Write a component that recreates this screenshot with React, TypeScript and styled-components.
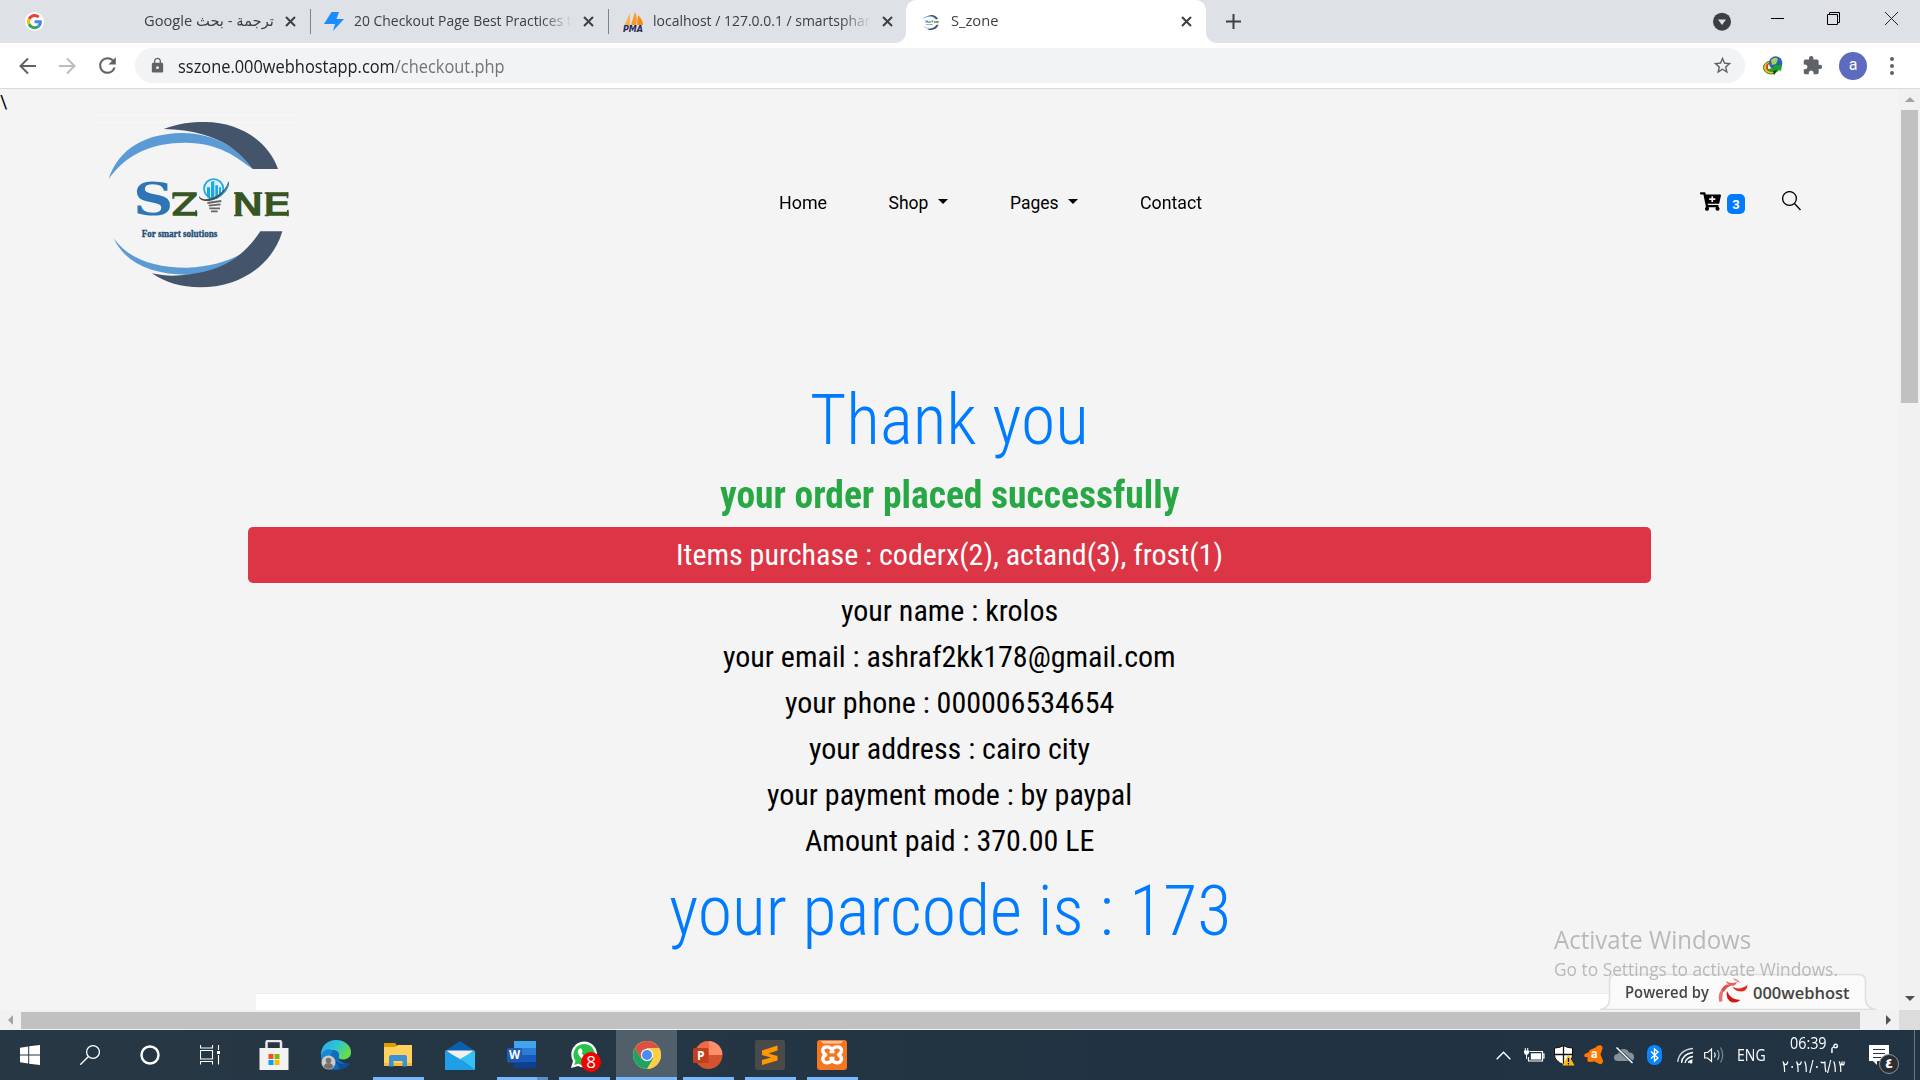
import React, { useLayoutEffect, useRef, useState } from "react";
import styled, { createGlobalStyle, css } from "styled-components";
import { FaCartPlus } from "react-icons/fa";
import { MdExtension, MdLock, MdRefresh, MdStarBorder } from "react-icons/md";

const UI_FONT = `"Open Sans", "Noto Sans", "DejaVu Sans", sans-serif`;
const SITE_FONT = `Roboto, "Liberation Sans", sans-serif`;
const HEAD_FONT = `"Roboto Condensed", Roboto, "Liberation Sans", sans-serif`;

const GlobalStyle = createGlobalStyle`
  * { box-sizing: border-box; }
  html, body { margin: 0; padding: 0; overflow: hidden; }
  h1, h2, h4, p { margin: 0; }
  svg { display: block; flex: none; }
`;

/* ---------- text condensed to a given width ---------- */

const FitBox = styled.span`
  display: inline-flex;
  flex: none;
  justify-content: flex-start;
  white-space: pre;
  direction: ltr;
`;
const FitInner = styled.span`
  display: inline-block;
  flex: none;
  transform-origin: left center;
`;

function Fit({ w, rtl, children }: { w: number; rtl?: boolean; children: React.ReactNode }) {
  const ref = useRef<HTMLSpanElement>(null);
  const [scale, setScale] = useState(1);
  useLayoutEffect(() => {
    if (ref.current) setScale(w / ref.current.offsetWidth);
  }, [w]);
  return (
    <FitBox style={{ width: w }}>
      <FitInner ref={ref} dir={rtl ? "rtl" : "ltr"} style={{ transform: `scaleX(${scale})` }}>
        {children}
      </FitInner>
    </FitBox>
  );
}

/* ---------- window ---------- */

const Screen = styled.div`
  width: 1920px;
  height: 1080px;
  display: flex;
  flex-direction: column;
  overflow: hidden;
  position: relative;
  background: #f4f4f4;
  font-family: ${UI_FONT};
`;

const TabStrip = styled.div`
  height: 43px;
  flex: none;
  display: flex;
  background: #dee1e6;
`;

const Tab = styled.div<{ $w: number; $pad: number; $active?: boolean; $divider?: boolean }>`
  width: ${(p) => p.$w}px;
  height: 43px;
  flex: none;
  display: flex;
  align-items: center;
  padding-left: ${(p) => p.$pad}px;
  position: relative;
  font-size: 15px;
  color: #3c4043;
  ${(p) =>
    p.$divider &&
    css`
      &::after {
        content: "";
        position: absolute;
        right: 0;
        top: 9px;
        width: 1px;
        height: 25px;
        background: #808387;
      }
    `}
  ${(p) =>
    p.$active &&
    css`
      background: #fff;
      border-radius: 10px 10px 0 0;
      &::before,
      &::after {
        content: "";
        position: absolute;
        bottom: 0;
        width: 10px;
        height: 10px;
      }
      &::before {
        left: -10px;
        background: radial-gradient(circle at 0 0, transparent 9.5px, #fff 10px);
      }
      &::after {
        right: -10px;
        background: radial-gradient(circle at 100% 0, transparent 9.5px, #fff 10px);
      }
    `}
`;

const TabTitle = styled.div<{ $ml: number; $fade?: boolean }>`
  display: flex;
  margin-left: ${(p) => p.$ml}px;
  padding-bottom: 3px;
  ${(p) => p.$fade && css`mask-image: linear-gradient(90deg, #000 86%, transparent 100%);`}
`;

const TabClose = styled.div<{ $ml: number }>`
  margin-left: ${(p) => p.$ml}px;
`;

const CloseX = () => (
  <svg width="11" height="11" viewBox="0 0 11 11">
    <path d="M1 1l9 9M10 1l-9 9" stroke="#3c4043" strokeWidth="2" />
  </svg>
);

const WindowControls = styled.div`
  margin-left: auto;
  display: flex;
  padding: 12px 22px 0 0;
`;
const ControlSlot = styled.div<{ $mr?: number }>`
  margin-right: ${(p) => p.$mr ?? 0}px;
`;

const NewTab = styled.div`
  display: flex;
  align-items: center;
  padding-left: 20px;
`;

const Toolbar = styled.div`
  height: 46px;
  flex: none;
  display: flex;
  align-items: center;
  background: #fff;
  border-bottom: 1px solid #d9dbde;
  padding: 0 23px 0 17px;
`;
const NavButtons = styled.div`
  width: 118px;
  display: flex;
  align-items: center;
  gap: 20px;
`;
const Reload = styled.div`
  margin-left: -2px;
`;
const Omnibox = styled.div`
  width: 1610px;
  flex: none;
  height: 35px;
  border-radius: 18px;
  background: #f1f3f4;
  display: flex;
  align-items: center;
  padding: 0 12px 0 14px;
  font-size: 17.5px;
  color: #202124;
`;
const Url = styled.div`
  display: flex;
  margin: 0 auto 0 12px;
`;
const UrlPath = styled.span`
  color: #70757a;
`;
const Extensions = styled.div`
  flex: 1;
  display: flex;
  align-items: center;
  padding-left: 18px;
`;
const Puzzle = styled.div`
  margin-left: 19px;
`;
const Avatar = styled.div`
  width: 28px;
  height: 28px;
  margin: 0 0 0 16px;
  border-radius: 50%;
  background: #5c6bc0;
  color: #fff;
  font: 16px/26px Roboto, sans-serif;
  text-align: center;
`;
const MenuDots = styled.div`
  margin-left: auto;
  display: grid;
  gap: 3px;
  padding-right: 3px;
  span {
    width: 4px;
    height: 4px;
    border-radius: 50%;
    background: #5f6368;
  }
`;

/* ---------- page ---------- */

const Viewport = styled.div`
  flex: 1;
  display: flex;
  min-height: 0;
`;
const PageColumn = styled.div`
  width: 1899px;
  display: flex;
  flex-direction: column;
`;
const Page = styled.main`
  height: 921px;
  display: flex;
  flex-direction: column;
  overflow: hidden;
  background: #f4f4f4;
  font-family: ${SITE_FONT};
  color: #000;
`;
const Stray = styled.div`
  height: 11px;
  font-size: 17.5px;
  line-height: 26px;
  overflow: visible;
`;
const Header = styled.header`
  height: 200px;
  flex: none;
  display: flex;
  padding-left: 90px;
`;
const Menu = styled.nav`
  display: flex;
  align-items: flex-start;
  margin-left: 468.5px;
  padding-top: 90px;
  font-size: 17.5px;
  line-height: 26px;
`;
const MenuItem = styled.div<{ $gap?: number }>`
  display: flex;
  align-items: center;
  margin-right: ${(p) => p.$gap ?? 0}px;
`;
const Caret = styled.span`
  margin: 0 0 3px 9px;
  border: 5.3px solid transparent;
  border-top-color: #000;
  border-bottom: 0;
`;
const HeaderTools = styled.div`
  margin-left: auto;
  display: flex;
  align-items: flex-start;
  padding: 91px 98px 0 0;
`;
const CartBadge = styled.span`
  width: 18px;
  height: 20px;
  margin: 3px 37px 0 6px;
  border-radius: 5px;
  background: #007bff;
  color: #fff;
  font: 700 13px/21px Roboto, sans-serif;
  text-align: center;
`;

const Order = styled.section`
  width: 1403px;
  margin: 78px 0 0 248px;
  display: flex;
  flex-direction: column;
  align-items: center;
  gap: 10px;
  font-family: ${HEAD_FONT};
  font-stretch: 75%;
`;
const Display = styled.h1`
  font-size: 70px;
  line-height: 84px;
  font-weight: 300;
  color: #007bff;
`;
const Success = styled.h2`
  height: 45px;
  font-size: 38px;
  line-height: 46px;
  font-weight: 700;
  color: #28a745;
`;
const Purchase = styled.h4`
  width: 100%;
  padding: 10px;
  border-radius: 5px;
  background: #dc3545;
  color: #fff;
  text-align: center;
  font-size: 30px;
  line-height: 36px;
  font-weight: 400;
`;
const Detail = styled.h4`
  font-size: 30px;
  line-height: 36px;
  font-weight: 400;
`;
const FooterPanel = styled.div`
  flex: none;
  width: 1387px;
  height: 18px;
  margin: 40px 0 0 256px;
  border-top: 1px solid #ececec;
  background: #fff;
`;

/* ---------- scroll bars ---------- */

const VScroll = styled.div`
  width: 21px;
  display: flex;
  flex-direction: column;
  align-items: center;
  background: #f1f1f1;
`;
const VThumb = styled.div`
  width: 17px;
  height: 293px;
  background: #c1c1c1;
`;
const VArrow = styled.div<{ $h: number; $mt?: boolean }>`
  height: ${(p) => p.$h}px;
  display: flex;
  align-items: center;
  ${(p) => p.$mt && css`margin-top: auto;`}
`;
const Corner = styled.div`
  width: 21px;
  height: 20px;
  background: #dcdcdc;
`;
const HScroll = styled.div`
  height: 20px;
  display: flex;
  align-items: center;
  background: #f1f1f1;
  padding: 0 8px;
`;
const HThumb = styled.div`
  width: 1839px;
  height: 17px;
  margin: 0 26px 0 8px;
  background: #c1c1c1;
`;

/* ---------- overlays ---------- */

const Activate = styled.div`
  position: absolute;
  left: 1554px;
  top: 922px;
  color: #b9b9b9;
  display: flex;
  flex-direction: column;
  font-weight: 400;
`;
const ActivateTitle = styled.div`
  display: flex;
  font-size: 25px;
  line-height: 34px;
`;
const ActivateText = styled.div`
  display: flex;
  font-size: 18px;
  line-height: 27px;
`;
const Powered = styled.div`
  position: absolute;
  left: 1600px;
  top: 973px;
  width: 276px;
  height: 37px;
`;
const PoweredShape = styled.svg`
  position: absolute;
  inset: 0;
`;
const PoweredRow = styled.div`
  position: relative;
  height: 37px;
  display: flex;
  align-items: center;
  padding: 1px 0 0 25px;
  color: #454545;
  font-size: 15.5px;
  font-weight: 600;
`;
const Mark = styled.div`
  margin: 0 5px 2px 9px;
`;
const Brand = styled.span`
  display: flex;
  font-size: 16.5px;
`;

/* ---------- task bar ---------- */

const Taskbar = styled.footer`
  height: 50px;
  flex: none;
  display: flex;
  color: #fff;
  background: linear-gradient(90deg, #273744, #253644 30%, #213242 60%, #223443);
`;
const SystemButtons = styled.div`
  display: flex;
  width: 244px;
`;
const SystemButton = styled.div`
  width: 60px;
  display: flex;
  align-items: center;
  justify-content: center;
`;
const AppButton = styled.div<{ $active?: boolean; $running?: boolean; $stack?: boolean; $nudge?: number }>`
  width: 62px;
  display: flex;
  align-items: center;
  justify-content: center;
  position: relative;
  padding-right: ${(p) => p.$nudge ?? 0}px;
  ${(p) =>
    p.$active &&
    css`
      background: #505f6a;
      background-clip: padding-box;
      border-right: 1px solid transparent;
    `}
  ${(p) =>
    p.$running &&
    css`
      &::after {
        content: "";
        position: absolute;
        bottom: 0;
        left: ${p.$active ? 0 : 5}px;
        width: ${p.$active ? 61 : 51}px;
        height: 3px;
        background: ${p.$stack ? "linear-gradient(90deg,#76b9ff 40px,#5d8fc4 40px)" : "#76b9ff"};
      }
    `}
`;
const Badge8 = styled.span`
  position: absolute;
  left: 27px;
  top: 22px;
  width: 20px;
  height: 20px;
  border-radius: 50%;
  background: #f60000;
  font: 17px/20px "Open Sans", sans-serif;
  text-align: center;
`;
const Tray = styled.div`
  margin-left: auto;
  display: flex;
  align-items: center;
`;
const TraySlot = styled.div<{ $w: number }>`
  width: ${(p) => p.$w}px;
  display: flex;
  align-items: center;
`;
const Language = styled.div`
  width: 45px;
  font-size: 15.5px;
  display: flex;
  padding-bottom: 1px;
`;
const Clock = styled.div`
  width: 87px;
  display: flex;
  flex-direction: column;
  font-size: 15.5px;
  line-height: 23px;
`;
const ClockTime = styled.div`
  display: flex;
  padding-left: 8px;
`;
const ClockDate = styled.div`
  display: flex;
  font-family: "DejaVu Sans", sans-serif;
  font-size: 16.5px;
`;
const Notice = styled.div`
  width: 45px;
  height: 50px;
  position: relative;
  padding-top: 15px;
`;
const NoticeCount = styled.span`
  position: absolute;
  left: 10px;
  top: 24px;
  width: 20px;
  height: 20px;
  border-radius: 50%;
  border: 1px solid #8b949b;
  background: #2b2f33;
  font: 700 14px/17px "DejaVu Sans", sans-serif;
  text-align: center;
`;
const ShowDesktop = styled.div`
  width: 6px;
  height: 50px;
  border-left: 1px solid #6a7680;
`;

/* ---------- drawings ---------- */

const GoogleG = () => (
  <svg width="19" height="19" viewBox="0 0 48 48">
    <circle cx="24" cy="24" r="24" fill="#fff" />
    <g transform="translate(5 5) scale(.8)">
      <path fill="#EA4335" d="M24 9.500c3.500 0 6.700 1.200 9.200 3.600l6.900-6.900C35.900 2.400 30.500 0 24 0 14.600 0 6.500 5.400 2.600 13.200l8 6.200C12.400 13.700 17.700 9.500 24 9.500z" />
      <path fill="#4285F4" d="M47 24.600c0-1.600-.2-3.100-.4-4.600H24v9h12.900c-.6 3-2.300 5.500-4.800 7.200l7.700 6C44.400 38 47 32 47 24.600z" />
      <path fill="#FBBC05" d="M10.500 28.600c-.5-1.500-.8-3-.8-4.600s.3-3.100.8-4.600l-8-6.200C.9 16.500 0 20.100 0 24s.9 7.500 2.600 10.800z" />
      <path fill="#34A853" d="M24 48c6.500 0 11.900-2.100 15.900-5.800l-7.700-6c-2.200 1.400-4.900 2.300-8.200 2.300-6.300 0-11.600-4.200-13.500-9.900l-8 6.200C6.500 42.600 14.600 48 24 48z" />
    </g>
  </svg>
);

const Bolt = () => (
  <svg width="20" height="19" viewBox="0 0 20 19">
    <path d="M7.500 0h7.500l-2.500 7H20L9 19l2-7H0z" fill="#1b8cff" />
  </svg>
);

const PmaIcon = () => (
  <svg width="21" height="20" viewBox="0 0 21 20">
    <path d="M7 1v13H1z" fill="#f7b25a" />
    <path d="M12 0q3 7 1 13H8z" fill="#f79a1e" />
    <path d="M15 3q5 5 5 10h-6z" fill="#f78c12" />
    <text x="0" y="19.500" fontSize="8" fontWeight="700" fontStyle="italic" fontFamily="DejaVu Sans, sans-serif" fill="#2d2b55" textLength="20" lengthAdjust="spacingAndGlyphs">PMA</text>
  </svg>
);

const Logo = ({ width, height }: { width: number; height: number }) => (
  <svg width={width} height={height} viewBox="0 0 660 600">
    <path d="M24 46h600M24 68h600" stroke="#fff" strokeWidth="2" opacity=".7" />
    <path d="M56 237C78 168 140 100 278 99C375 99 450 150 496 206L487 206C440 172 390 129 285 128C190 128 110 160 56 237z" fill="#5b9bd5" />
    <path d="M221 87C270 70 300 66 345 66C450 66 535 125 564 207L489 207C455 165 400 92 221 87z" fill="#44546a" />
    <path d="M71 415C110 470 180 503 290 503C370 500 430 480 475 448C440 495 380 521 290 524C190 524 105 490 71 415z" fill="#5b9bd5" />
    <path d="M511 394H577C548 495 450 562 330 562C275 562 225 548 186 520C230 530 260 528 300 523C400 510 460 470 511 394z" fill="#44546a" />
    <g>
      <text x="130" y="345" fontSize="136" fontWeight="700" fill="#2e75b6" fontFamily="DejaVu Serif, serif" textLength="120" lengthAdjust="spacingAndGlyphs">S</text>
      <g fill="#375623" stroke="#375623" strokeWidth="4" fontSize="93" fontFamily="DejaVu Sans, sans-serif">
        <text x="245" y="346" textLength="79" lengthAdjust="spacingAndGlyphs">Z</text>
        <text x="427" y="346" textLength="93" lengthAdjust="spacingAndGlyphs">N</text>
        <text x="519" y="346" textLength="82" lengthAdjust="spacingAndGlyphs">E</text>
      </g>
      <path d="M247 278h6v18h-6zM316 331h5v18h-5zM432 277h16v5h-16zM432 344h26v5h-26zM490 277h27v5h-27zM590 277h5v18h-5zM591 330h5v19h-5zM524 277h12v5h-12zM524 344h12v5h-12z" fill="#375623" />
      <text x="155" y="411" fontSize="33" fontWeight="700" fill="#1f4e79" fontFamily="Liberation Serif, serif" textLength="227" lengthAdjust="spacingAndGlyphs" stroke="#1f4e79">For smart solutions</text>
    </g>
    <circle cx="371" cy="266" r="29" fill="#d9f1fc" stroke="#1ea7e1" strokeWidth="5" />
    <path d="M351 292V262h9v36zM363 300V246l10-4v58zM376 298v-42h8v38zM387 290v-28h6v22z" fill="#1ea7e1" />
    <path d="M327 287C335 310 400 295 416 243C424 270 380 305 350 303C335 302 326 297 327 287z" fill="#4c4c4c" />
    <path d="M365 300C385 295 408 276 415 245C420 266 395 296 365 300z" fill="#1ea7e1" />
    <path d="M352 309l42-6M356 317l36-4M358 325h32M363 334h20" stroke="#666" strokeWidth="5.500" />
  </svg>
);

const IdmIcon = () => (
  <svg width="20" height="20" viewBox="0 0 20 20">
    <ellipse cx="8" cy="11.500" rx="7.500" ry="6.500" fill="#e8c61c" stroke="#388b22" />
    <ellipse cx="8.500" cy="11" rx="5.500" ry="5" fill="#e53a22" />
    <ellipse cx="9" cy="11" rx="4" ry="4" fill="#fff" />
    <circle cx="12.700" cy="7" r="6.700" fill="#2a63b5" />
    <path d="M8 4q4-4 7-1l-2 5-4 1z" fill="#a9ce62" />
    <path d="M3 13q5 1 9-3l-1-1h8l-1 6-2-1q-3 2-5 5l-1-4q-4 1-7-2z" fill="#1ea12b" />
    <path d="M10 15l1 4q1-3 4-5z" fill="#0a4d10" />
  </svg>
);

const WebhostMark = () => (
  <svg width="30" height="26" viewBox="0 0 30 26">
    <path d="M14.500 8.500Q21 13 29.500 7Q29 13 23.500 13.500Q17 13.500 14.500 8.500z" fill="#dd2a1c" />
    <path d="M9 13Q12 21.500 22.500 22Q17 26.500 11.500 23Q7.500 19.500 9 13z" fill="#d0180d" />
    <path d="M1.500 24Q-1.500 14 7 9.500Q3.500 15 4.500 23z" fill="#e6746c" />
    <path d="M3 12Q7 4 14 7.500Q8.500 8.500 6 14z" fill="#dd5248" />
    <path d="M8 3Q12.500 6.500 19 4Q17.500 8.500 13 7.500Q9 6.500 8 3z" fill="#e4605a" />
    <path d="M14.500 .5Q20.500 .5 22 5Q18.500 4 14.500 .5z" fill="#ea8a84" />
  </svg>
);

const EdgeIcon = () => (
  <svg width="30" height="31" viewBox="0 0 30 31">
    <defs>
      <linearGradient id="edgeTop" x1="0" x2="1" y1="0" y2=".5">
        <stop offset="0" stopColor="#27a6e8" />
        <stop offset=".55" stopColor="#2fc6cf" />
        <stop offset="1" stopColor="#69dd45" />
      </linearGradient>
    </defs>
    <circle cx="15" cy="15" r="15" fill="#0f6cbd" />
    <path d="M0 13C1 5 7 0 15 0c9 0 15 6 15 12 0 5-4 7.500-8 7.500-3 0-5-1-4-3 1-5-3-7-7-6.500C6 10 1 13 0 17z" fill="url(#edgeTop)" />
    <path d="M0 15c3-6 9-7 12-4-4 4-3 10 1 13l-2 6C4 28 0 22 0 15z" fill="#1787d9" />
    <path d="M12 17q4 10 16 5.500l1 1Q25 30 15 30q6-2 1-6-4-3-4-7z" fill="#0d4f99" />
    <path d="M19 19q5 2.500 11-3 0 5-3 7.500-6 0-9-4z" fill="#253644" />
    <circle cx="7.500" cy="22.500" r="7" fill="#cfcac6" />
    <circle cx="7.500" cy="20.500" r="2.800" fill="#77716d" />
    <path d="M2.500 27q1-4 5-4t5 4q-5 4-10 0z" fill="#77716d" />
  </svg>
);

const XamppIcon = () => (
  <svg width="30" height="30" viewBox="0 0 30 30">
    <rect width="30" height="30" rx="3" fill="#f37623" />
    <path d="M4 1h22l-2 2.500H6z" fill="#f9c39c" />
    <path
      d="M15 11.500C15.500 5.500 24.500 5.500 24.500 10.500C24.500 13.500 21.500 14.500 21.500 14.800C21.500 15.200 24.500 16 24.500 19C24.500 24 15.500 24 15 18.500C14.500 24 5.800 24 5.800 19C5.800 16 8.800 15.200 8.800 14.800C8.800 14.500 5.800 13.500 5.800 10.500C5.800 5.500 14.500 5.500 15 11.500z"
      fill="none"
      stroke="#fff"
      strokeWidth="3.400"
      strokeLinejoin="round"
    />
    <path d="M12.500 12h5M12.500 18h5" stroke="#fff" strokeWidth="2.400" />
  </svg>
);

export default function App() {
  return (
    <Screen>
      <GlobalStyle />
      <TabStrip>
        <Tab $w={311} $pad={25} $divider>
          <GoogleG />
          <TabTitle $ml={100}><Fit w={130} rtl>ترجمة - بحث Google</Fit></TabTitle>
          <TabClose $ml={11}><CloseX /></TabClose>
        </Tab>
        <Tab $w={298} $pad={13} $divider>
          <Bolt />
          <TabTitle $ml={10} $fade><Fit w={218}>20 Checkout Page Best Practices t</Fit></TabTitle>
          <TabClose $ml={11}><CloseX /></TabClose>
        </Tab>
        <Tab $w={297} $pad={14}>
          <PmaIcon />
          <TabTitle $ml={9} $fade><Fit w={218}>localhost / 127.0.0.1 / smartsphar</Fit></TabTitle>
          <TabClose $ml={11}><CloseX /></TabClose>
        </Tab>
        <Tab $w={300} $pad={15} $active>
          <Logo width={20} height={20} />
          <TabTitle $ml={10}><Fit w={47}>S_zone</Fit></TabTitle>
          <TabClose $ml={183}><CloseX /></TabClose>
        </Tab>
        <NewTab>
          <svg width="15" height="15" viewBox="0 0 15 15"><path d="M7.500 0v15M0 7.500h15" stroke="#3c4043" strokeWidth="2" /></svg>
        </NewTab>
        <WindowControls>
          <ControlSlot $mr={40}>
            <svg width="18" height="19" viewBox="0 0 18 19"><circle cx="9" cy="9.700" r="9" fill="#3c4043" /><path d="M5 7.500h8l-4 5.500z" fill="#dee1e6" /></svg>
          </ControlSlot>
          <ControlSlot $mr={43}>
            <svg width="13" height="13" viewBox="0 0 13 13"><path d="M0 6.500h13" stroke="#000" /></svg>
          </ControlSlot>
          <ControlSlot $mr={45}>
            <svg width="13" height="13" viewBox="0 0 13 13" fill="none" stroke="#000"><path d="M.5 2.500h10v10H.5zM2.500 2.500V.5h10v10h-2" /></svg>
          </ControlSlot>
          <ControlSlot>
            <svg width="13" height="13" viewBox="0 0 13 13"><path d="M0 0l13 13M13 0L0 13" stroke="#222" /></svg>
          </ControlSlot>
        </WindowControls>
      </TabStrip>

      <Toolbar>
        <NavButtons>
          <svg width="20" height="20" viewBox="0 0 20 20" fill="none" stroke="#5f6368" strokeWidth="2"><path d="M19 10H4M11 2.500L3.500 10l7.500 7.500" /></svg>
          <svg width="20" height="20" viewBox="0 0 20 20" fill="none" stroke="#bbbdbf" strokeWidth="2"><path d="M2 10h15M10 2.500l7.500 7.500-7.500 7.500" /></svg>
          <Reload><MdRefresh size={25} color="#5f6368" /></Reload>
        </NavButtons>
        <Omnibox>
          <MdLock size={17} color="#5f6368" />
          <Url>
            <Fit w={327}>sszone.000webhostapp.com<UrlPath>/checkout.php</UrlPath></Fit>
          </Url>
          <MdStarBorder size={21} color="#5f6368" />
        </Omnibox>
        <Extensions>
          <IdmIcon />
          <Puzzle><MdExtension size={21} color="#5f6368" /></Puzzle>
          <Avatar>a</Avatar>
          <MenuDots><span /><span /><span /></MenuDots>
        </Extensions>
      </Toolbar>

      <Viewport>
        <PageColumn>
          <Page>
            <Stray>\</Stray>
            <Header>
              <Logo width={220} height={200} />
              <Menu>
                <MenuItem $gap={62}><Fit w={48}>Home</Fit></MenuItem>
                <MenuItem $gap={62.5}><Fit w={40}>Shop</Fit><Caret /></MenuItem>
                <MenuItem $gap={62}><Fit w={49}>Pages</Fit><Caret /></MenuItem>
                <MenuItem><Fit w={62}>Contact</Fit></MenuItem>
              </Menu>
              <HeaderTools>
                <FaCartPlus size={21} />
                <CartBadge>3</CartBadge>
                <svg width="19" height="20" viewBox="0 0 19 20" fill="none" stroke="#000" strokeWidth="1.300"><circle cx="7.500" cy="7.500" r="6.900" /><path d="M12.500 12.500l6 6.500" /></svg>
              </HeaderTools>
            </Header>
            <Order>
              <Display><Fit w={279}>Thank you</Fit></Display>
              <Success><Fit w={459}>your order placed successfully</Fit></Success>
              <Purchase><Fit w={547}>Items purchase : coderx(2), actand(3), frost(1)</Fit></Purchase>
              <Detail><Fit w={217}>your name : krolos</Fit></Detail>
              <Detail><Fit w={453}>your email : ashraf2kk178@gmail.com</Fit></Detail>
              <Detail><Fit w={329}>your phone : 000006534654</Fit></Detail>
              <Detail><Fit w={281}>your address : cairo city</Fit></Detail>
              <Detail><Fit w={365}>your payment mode : by paypal</Fit></Detail>
              <Detail><Fit w={289}>Amount paid : 370.00 LE</Fit></Detail>
              <Display><Fit w={562}>your parcode is : 173</Fit></Display>
            </Order>
            <FooterPanel />
          </Page>
          <HScroll>
            <svg width="5" height="10" viewBox="0 0 5 10"><path d="M5 0v10L0 5z" fill="#a3a3a3" /></svg>
            <HThumb />
            <svg width="5" height="10" viewBox="0 0 5 10"><path d="M0 0v10l5-5z" fill="#505050" /></svg>
          </HScroll>
        </PageColumn>
        <VScroll>
          <VArrow $h={21}><svg width="10" height="5" viewBox="0 0 10 5"><path d="M0 5h10L5 0z" fill="#a3a3a3" /></svg></VArrow>
          <VThumb />
          <VArrow $h={24} $mt><svg width="10" height="5" viewBox="0 0 10 5"><path d="M0 0h10L5 5z" fill="#505050" /></svg></VArrow>
          <Corner />
        </VScroll>
      </Viewport>

      <Powered>
        <PoweredShape width="276" height="37" viewBox="0 0 276 37">
          <path d="M0 36.500Q9.500 35 9.500 26V8Q9.500 1.500 16 1.500H258Q265.500 1.500 265.500 8V26Q265.500 35 276 36.500z" fill="#fafafa" stroke="#dedede" strokeWidth="1.500" />
        </PoweredShape>
        <PoweredRow>
          <Fit w={84}>Powered by</Fit>
          <Mark><WebhostMark /></Mark>
          <Brand><Fit w={97}>000webhost</Fit></Brand>
        </PoweredRow>
      </Powered>

      <Activate>
        <ActivateTitle><Fit w={197}>Activate Windows</Fit></ActivateTitle>
        <ActivateText><Fit w={284}>Go to Settings to activate Windows.</Fit></ActivateText>
      </Activate>

      <Taskbar>
        <SystemButtons>
          <SystemButton>
            <svg width="20" height="20" viewBox="0 0 20 20" fill="#fff"><path d="M0 2.700l8.200-1.200v8H0zM9.200 1.300L20 0v9.500H9.200zM0 10.500h8.200v8L0 17.300zM9.200 10.500H20V20L9.200 18.700z" /></svg>
          </SystemButton>
          <SystemButton>
            <svg width="20" height="20" viewBox="0 0 20 20" fill="none" stroke="#fff" strokeWidth="1.300"><circle cx="13" cy="7" r="6.400" /><path d="M8.500 11.500L.3 19.700" /></svg>
          </SystemButton>
          <SystemButton>
            <svg width="20" height="20" viewBox="0 0 20 20" fill="none" stroke="#fff" strokeWidth="2.500"><circle cx="10" cy="10" r="8.500" /></svg>
          </SystemButton>
          <SystemButton>
            <svg width="20" height="20" viewBox="0 0 20 20" fill="none" stroke="#fff" strokeWidth="1.100"><path d="M.5 5.500h12v8.500H.5zM.5 0v3h12V0M.5 19.500v-3h12v3M18.500 0v5M18.500 10v9.500" /><path d="M17 6h3v3h-3z" fill="#fff" stroke="none" /></svg>
          </SystemButton>
        </SystemButtons>
        <AppButton $nudge={3}>
          <svg width="30" height="30" viewBox="0 0 30 30">
            <path d="M7.500 9V2.500q0-1.500 1.500-1.500h11.500q1.500 0 1.500 1.500V9" fill="none" stroke="#e8e8e8" strokeWidth="2.500" />
            <path d="M.5 8h29v22h-29z" fill="#f2f2f2" />
            <path d="M9.500 14h5v5h-5z" fill="#f25022" /><path d="M15.500 14h5v5h-5z" fill="#7fba00" />
            <path d="M9.500 20h5v5h-5z" fill="#00a4ef" /><path d="M15.500 20h5v5h-5z" fill="#ffb900" />
          </svg>
        </AppButton>
        <AppButton $nudge={2}><EdgeIcon /></AppButton>
        <AppButton $running $nudge={2}>
          <svg width="28" height="24" viewBox="0 0 28 24">
            <path d="M0 0h11l2 2.500V5H0z" fill="#e09b00" /><path d="M0 4h11l3-2h14v21H0z" fill="#ffd25e" />
            <path d="M0 20h28v3H0z" fill="#f3bb3c" />
            <path d="M5 23.500V14q0-2 2-2h14q2 0 2 2v9.500h-4.500V18h-9v5.500z" fill="#3d8fd8" />
          </svg>
        </AppButton>
        <AppButton $nudge={2}>
          <svg width="30" height="29" viewBox="0 0 30 29">
            <path d="M0 10L15 0l15 10z" fill="#0a5fae" /><path d="M1 9.500h28L15 20z" fill="#f1f1f1" />
            <path d="M0 9.500l15 8.500 15 11H0z" fill="#1e9fe8" /><path d="M30 9.500L15 18l15 11z" fill="#35c1f5" />
          </svg>
        </AppButton>
        <AppButton $running $stack $nudge={2}>
          <svg width="30" height="28" viewBox="0 0 30 28">
            <path d="M7 0h22v7H7z" fill="#41a5ee" /><path d="M7 7h22v7H7z" fill="#2b7cd3" /><path d="M7 14h22v7H7z" fill="#185abd" /><path d="M7 21h22v6.500H7z" fill="#103f91" />
            <rect y="7" width="15" height="14.500" rx="1.500" fill="#1b5ab7" />
            <text x="7.500" y="18.300" fontSize="11.500" fontWeight="700" textAnchor="middle" fill="#fff" fontFamily="Open Sans, sans-serif">W</text>
          </svg>
        </AppButton>
        <AppButton $running $nudge={2}>
          <svg width="28" height="28" viewBox="0 0 28 28">
            <path d="M14 .5A13 13 0 0 0 3 20L1 27l7-2A13 13 0 1 0 14 .5z" fill="#fff" />
            <path d="M14 3A10.700 10.700 0 0 0 5.500 20L4.200 24l4.300-1.200A10.700 10.700 0 1 0 14 3z" fill="#29c34b" />
            <path d="M9.500 7.500q1.500-1 2.200.7l.9 2.200q-.2 1-1 1.600 1.500 3 4.400 4.200l1.300-1.400 3 1.400q.3 3-3 3.500-7-1-9.500-8-.2-3 1.700-4.200z" fill="#fff" />
          </svg>
          <Badge8>8</Badge8>
        </AppButton>
        <AppButton $running $active>
          <svg width="28" height="28" viewBox="0 0 28 28">
            <circle cx="14" cy="14" r="14" fill="#ffcd46" />
            <path d="M14 14L8 17.500 1.900 7A14 14 0 0 0 14 28l6.200-10.500z" fill="#1da462" />
            <path d="M26.100 7H14L7.900 17.500 1.900 7A14 14 0 0 1 26.100 7z" fill="#dd5144" />
            <path d="M26.100 7a14 14 0 0 1-12.100 21l6.100-10.500Q22 13 19 7z" fill="#ffcd46" />
            <circle cx="14" cy="14" r="6.200" fill="#f3f3f3" /><circle cx="14" cy="14" r="5" fill="#4c8bf5" />
          </svg>
        </AppButton>
        <AppButton $running $nudge={2}>
          <svg width="30" height="28" viewBox="0 0 30 28">
            <path d="M16 0a14 14 0 1 0 13.500 14H16z" fill="#d35230" /><path d="M16 0v14H2A14 14 0 0 1 16 0z" fill="#ed6c47" /><path d="M16 0a14 14 0 0 1 13.500 14H16z" fill="#ff8f6b" />
            <rect y="7" width="15.500" height="15" rx="1.500" fill="#c43e1c" />
            <text x="7.700" y="18.500" fontSize="12" fontWeight="700" textAnchor="middle" fill="#fff" fontFamily="Open Sans, sans-serif">P</text>
          </svg>
        </AppButton>
        <AppButton $running $nudge={2}>
          <svg width="30" height="30" viewBox="0 0 30 30"><rect width="30" height="30" rx="2" fill="#4a4a4a" /><path d="M7 10.500L22.500 5.500v5L13.500 13.500l9 2.500v4.500L7 25v-5l9-2.500-9-2.500z" fill="#ff9800" /></svg>
        </AppButton>
        <AppButton $running $nudge={2}><XamppIcon /></AppButton>

        <Tray>
          <TraySlot $w={28}>
            <svg width="15" height="9" viewBox="0 0 15 9" fill="none" stroke="#fff" strokeWidth="1.400"><path d="M.7 8.300l6.800-7 6.800 7" /></svg>
          </TraySlot>
          <TraySlot $w={30}>
            <svg width="21" height="15" viewBox="0 0 21 15"><path d="M5.500 3.500h13v9.500h-14V9M18.500 6h1.500v4h-1.500" fill="none" stroke="#fff" strokeWidth="1.200" /><path d="M6.800 5.200h10.300v6.200H6.800zM0 2.500h5v2.500q-1 2-2.500 2T0 5zM.8 0h1v3h-1zM3.200 0h1v3h-1zM2 6.500h1V11H2z" fill="#fff" /></svg>
          </TraySlot>
          <TraySlot $w={30}>
            <svg width="21" height="21" viewBox="0 0 21 21"><path d="M9.500.5Q13 3 18.500 3v7q0 6-9 9.700Q.5 16 .5 10V3Q6 3 9.500.5z" fill="#fff" stroke="#111" /><path d="M9.500 0v19M0 9.500h19" stroke="#111" strokeWidth="1.300" /><path d="M14.500 9.500l6 11h-12z" fill="#fdbb12" /><path d="M14.500 13v4M14.500 18v1.500" stroke="#111" strokeWidth="1.300" /></svg>
          </TraySlot>
          <TraySlot $w={30}>
            <svg width="20" height="20" viewBox="0 0 20 20"><path d="M11.500 2.500Q13.500 0 16.500.3 19 1 18.500 3.500L16.500 9.500 19 15.500Q19.300 19 16 19.300L10.500 16.500 5 17Q2.500 16.500 3.500 14L4 12.500 1 12Q-.5 10.500 1 9L5 7Q5 4.500 7 4.500z" fill="#ff7800" /><text x="10.200" y="13" textAnchor="middle" fontSize="12" fontWeight="700" fill="#fff" fontFamily="Roboto, sans-serif">a</text></svg>
          </TraySlot>
          <TraySlot $w={33}>
            <svg width="21" height="17" viewBox="0 0 21 17"><path d="M4 14Q0 14 0 10.500T4 7Q5 2 9.500 2T15 5.500q5 0 5 4.500t-4 4z" fill="#87919a" /><path d="M2 .5l17 15.500" stroke="#253644" strokeWidth="3" /><path d="M2.500.5l16 15.500" stroke="#fff" strokeWidth="1.500" /></svg>
          </TraySlot>
          <TraySlot $w={30}>
            <svg width="15" height="20" viewBox="0 0 15 20"><rect width="15" height="20" rx="7" fill="#0a84ff" /><path d="M4 6.500l7 6.500-3.500 3V4l3.500 3-7 6.500" fill="none" stroke="#fff" strokeWidth="1.300" /></svg>
          </TraySlot>
          <TraySlot $w={27}>
            <svg width="17" height="17" viewBox="0 0 17 17" fill="none" stroke="#fff" strokeWidth="1.300"><path d="M.7 15Q2 3 16 1.500" opacity=".8" /><path d="M4.500 16Q5 7 16 5.500M8 16Q9 10.500 16 9.500" /><path d="M11.500 16q0-2 4-3" /><circle cx="14" cy="15" r="1.500" fill="#fff" stroke="none" /></svg>
          </TraySlot>
          <TraySlot $w={33}>
            <svg width="21" height="18" viewBox="0 0 21 18" fill="none" stroke="#fff" strokeWidth="1.200"><path d="M.7 6.500h3L7.500 3v12.500L3.700 12h-3z" /><path d="M10.500 6.500q1.500 2.500 0 5" /><path d="M13.500 4q3 5 0 10" opacity=".6" /><path d="M16.500 1.500q4.500 7.500 0 15" opacity=".4" /></svg>
          </TraySlot>
          <Language><Fit w={29}>ENG</Fit></Language>
          <Clock>
            <ClockTime><Fit w={49} rtl>م 06:39</Fit></ClockTime>
            <ClockDate><Fit w={63}>٢٠٢١/٠٦/١٣</Fit></ClockDate>
          </Clock>
          <Notice>
            <svg width="20" height="21" viewBox="0 0 20 21"><path d="M0 0h20v16H8v4l-4-4H0z" fill="#fff" /><path d="M4 4.500h12M4 8.500h12M4 12.500h8" stroke="#253644" strokeWidth="1.200" /></svg>
            <NoticeCount>٤</NoticeCount>
          </Notice>
          <ShowDesktop />
        </Tray>
      </Taskbar>
    </Screen>
  );
}
